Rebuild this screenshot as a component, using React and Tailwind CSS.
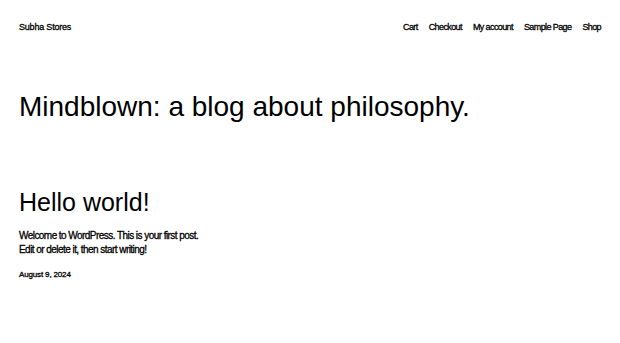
export default function App() {
    const links = ["Cart", "Checkout", "My account", "Sample Page", "Shop"];

    return (
        <div className="bg-white min-h-screen text-black font-['Liberation_Sans',Arial,sans-serif]">
            {/* Header */}
            <header className="h-[54px] px-[19px] flex items-center justify-between [-webkit-text-stroke:0.3px_black]">
                <a href="#" className="text-[9px] leading-[12px] tracking-[-0.2px]">Subha Stores</a>
                <nav className="flex items-center gap-[11px]">
                    {links.map((l) => (
                        <a key={l} href="#" className="text-[9px] leading-[12px] tracking-[-0.6px]">{l}</a>
                    ))}
                </nav>
            </header>

            <main className="px-[19px]">
                <h1 className="mt-[36px] text-[28px] leading-[34px]">Mindblown: a blog about philosophy.</h1>

                {/* Post */}
                <article className="mt-[63px]">
                    <h2 className="text-[25px] leading-[30px]">Hello world!</h2>
                    <div className="[-webkit-text-stroke:0.3px_black]">
                        <p className="mt-[12px] text-[10px] leading-[14px] tracking-[-0.55px] w-[190px]">
                            Welcome to WordPress. This is your first post. Edit or delete it, then start writing!
                        </p>
                        <p className="mt-[12px] text-[8px] leading-[12px] tracking-[-0.15px]">August 9, 2024</p>
                    </div>
                </article>
            </main>
        </div>
    );
}
